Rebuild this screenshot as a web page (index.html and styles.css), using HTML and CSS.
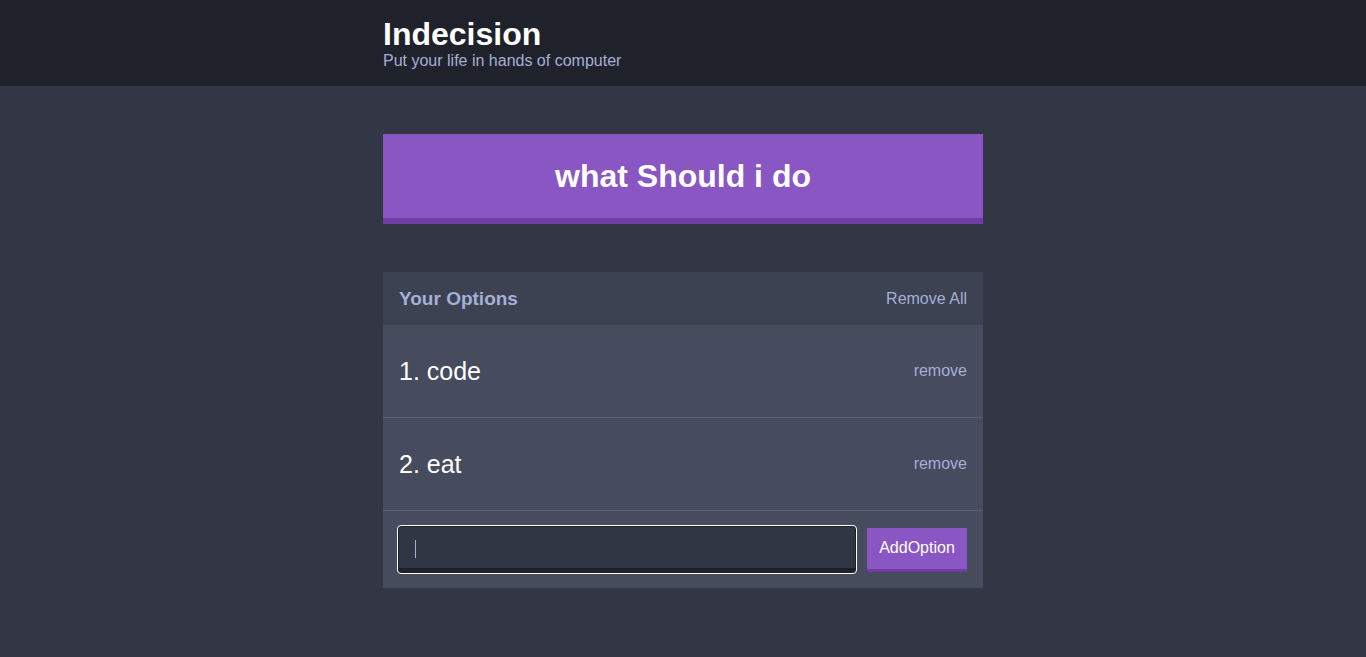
FILE: index.html
```html
<!DOCTYPE html>
<html lang="en">
<head>
<meta charset="utf-8">
<title>Indecision</title>
<link rel="stylesheet" href="styles.css">
</head>
<body>
<header class="header">
  <div class="container">
    <h1 class="header__title">Indecision</h1>
    <h2 class="header__subtitle">Put your life in hands of computer</h2>
  </div>
</header>
<main class="container">
  <button class="big-button">what Should i do</button>
  <div class="widget">
    <div class="widget-header">
      <h3 class="widget-header__title">Your Options</h3>
      <button class="button-link">Remove All</button>
    </div>
    <div class="option">
      <p class="option__text">1. code</p>
      <button class="button-link button-link--small">remove</button>
    </div>
    <div class="option">
      <p class="option__text">2. eat</p>
      <button class="button-link button-link--small">remove</button>
    </div>
    <form class="add-option">
      <div class="add-option__input"><span class="caret"></span></div>
      <button type="button" class="button">AddOption</button>
    </form>
  </div>
</main>
</body>
</html>
```
FILE: styles.css
```css
* { box-sizing: border-box; }
html, body { margin: 0; padding: 0; }
body {
  background: #333745;
  font-family: "Liberation Sans", Arial, sans-serif;
  color: #ffffff;
  min-height: 657px;
}
.container {
  width: 600px;
  margin: 0 auto;
}
.header {
  background: #20222b;
  padding: 16px 0 16px;
  margin-bottom: 48px;
}
.header__title {
  margin: 0;
  font-size: 32px;
  line-height: 36px;
  font-weight: bold;
  color: #ffffff;
}
.header__subtitle {
  margin: 0;
  font-size: 16px;
  line-height: 18px;
  font-weight: normal;
  color: #a5afd7;
}
.big-button {
  display: block;
  width: 100%;
  height: 90px;
  background: #8a56c3;
  border: none;
  border-bottom: 6px solid #6f3da4;
  color: #ffffff;
  font-family: inherit;
  font-weight: bold;
  font-size: 32px;
  padding: 0;
  margin: 0 0 48px;
}
.widget {
  background: #464b5e;
}
.widget-header {
  background: #3c4251;
  height: 53px;
  padding: 0 16px;
  display: flex;
  align-items: center;
  justify-content: space-between;
}
.widget-header__title {
  margin: 0;
  font-size: 19px;
  font-weight: bold;
  color: #a5afd7;
}
.button-link {
  background: none;
  border: none;
  padding: 0;
  font-family: inherit;
  font-size: 16px;
  color: #a5afd7;
}
.option {
  height: 93px;
  padding: 0 16px;
  border-bottom: 1px solid #5b6074;
  display: flex;
  align-items: center;
  justify-content: space-between;
}
.option__text {
  margin: 0;
  font-size: 25px;
  color: #ffffff;
}
.add-option {
  display: flex;
  align-items: center;
  padding: 15px 16px 15px 15px;
  margin: 0;
}
.add-option__input {
  flex: 1;
  height: 47px;
  margin-right: 11px;
  background: #313645;
  border-bottom: 4px solid #20222b;
  outline: 1px solid #ffffff;
  outline-offset: 0;
  border-radius: 3px;
  box-shadow: inset 0 0 0 1px #1d1f27;
  display: flex;
  align-items: center;
  padding-left: 17px;
}
.caret {
  display: block;
  width: 1px;
  height: 18px;
  margin-top: 3px;
  background: #a5afd7;
}
.button {
  width: 100px;
  height: 44px;
  background: #8a56c3;
  border: none;
  border-bottom: 3px solid #6f3da4;
  color: #ffffff;
  font-family: inherit;
  font-size: 16px;
  padding: 0;
}
```
